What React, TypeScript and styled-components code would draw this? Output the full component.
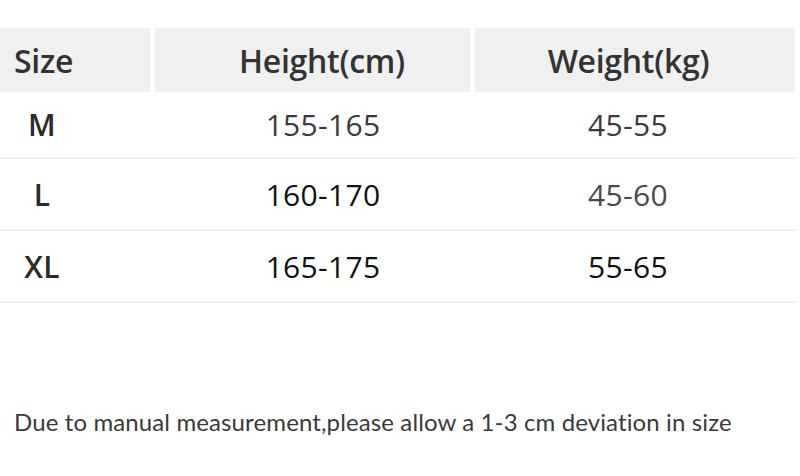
import React from 'react'
import styled, { createGlobalStyle } from 'styled-components'

const GlobalStyle = createGlobalStyle`
  html, body {
    margin: 0;
    padding: 0;
    background: #ffffff;
  }
  body {
    font-family: "Open Sans", "Liberation Sans", sans-serif;
    color: #333333;
  }
`

interface SizeRow {
  size: string
  height: string
  weight: string
  heightColor: string
  weightColor: string
}

const ROWS: SizeRow[] = [
  { size: 'M', height: '155-165', weight: '45-55', heightColor: '#3a3a3a', weightColor: '#3a3a3a' },
  { size: 'L', height: '160-170', weight: '45-60', heightColor: '#111111', weightColor: '#4a4a4a' },
  { size: 'XL', height: '165-175', weight: '55-65', heightColor: '#111111', weightColor: '#111111' },
]

const ROW_HEIGHTS = [67, 72, 72]

const App: React.FC = () => {
  return (
    <StyledPage>
      <GlobalStyle />
      <StyledTable>
        <StyledHeader>
          <StyledHeadCell align="left" padLeft={14} padRight={0}>Size</StyledHeadCell>
          <StyledHeadCell align="center" padLeft={19} padRight={0}>Height(cm)</StyledHeadCell>
          <StyledHeadCell align="center" padLeft={0} padRight={13}>Weight(kg)</StyledHeadCell>
        </StyledHeader>
        {ROWS.map((row, i) => (
          <StyledRow key={row.size} rowHeight={ROW_HEIGHTS[i]}>
            <StyledCell color="#2a2a2a" weight={600}>{row.size}</StyledCell>
            <StyledCell color={row.heightColor} weight={400}>{row.height}</StyledCell>
            <StyledCell color={row.weightColor} weight={400}>{row.weight}</StyledCell>
          </StyledRow>
        ))}
      </StyledTable>
      <StyledNote>Due to manual measurement,please allow a 1-3 cm deviation in size</StyledNote>
    </StyledPage>
  )
}

const StyledPage = styled.div`
  width: 800px;
  height: 476px;
  padding-top: 28px;
  box-sizing: border-box;
  display: flex;
  flex-direction: column;
`

const StyledTable = styled.div`
  width: 795px;
  display: flex;
  flex-direction: column;
`

const StyledHeader = styled.div`
  display: grid;
  grid-template-columns: 150px 315px 320px;
  column-gap: 5px;
  height: 64px;
`

interface HeadCellProps {
  align: 'left' | 'center'
  padLeft: number
  padRight: number
}

const StyledHeadCell = styled.div<HeadCellProps>`
  background-color: #f0f0f0;
  display: flex;
  align-items: center;
  justify-content: ${props => (props.align === 'left' ? 'flex-start' : 'center')};
  padding-left: ${props => props.padLeft}px;
  padding-right: ${props => props.padRight}px;
  font-size: 32px;
  font-weight: 600;
  color: #333333;
  letter-spacing: -0.3px;
`

interface RowProps {
  rowHeight: number
}

const StyledRow = styled.div<RowProps>`
  display: grid;
  grid-template-columns: 84px 478px 132px 1fr;
  height: ${props => props.rowHeight}px;
  border-bottom: 2px solid #efefef;
  box-sizing: border-box;
`

interface CellProps {
  color: string
  weight: number
}

const StyledCell = styled.div<CellProps>`
  display: flex;
  align-items: center;
  justify-content: center;
  font-size: 30px;
  font-weight: ${props => props.weight};
  color: ${props => props.color};
  letter-spacing: 0.3px;
`

const StyledNote = styled.div`
  margin-top: 104px;
  padding-left: 14px;
  font-family: Lato, "Open Sans", sans-serif;
  font-size: 24px;
  letter-spacing: 0.12px;
  color: #3a3a3a;
  white-space: nowrap;
`

export default App
